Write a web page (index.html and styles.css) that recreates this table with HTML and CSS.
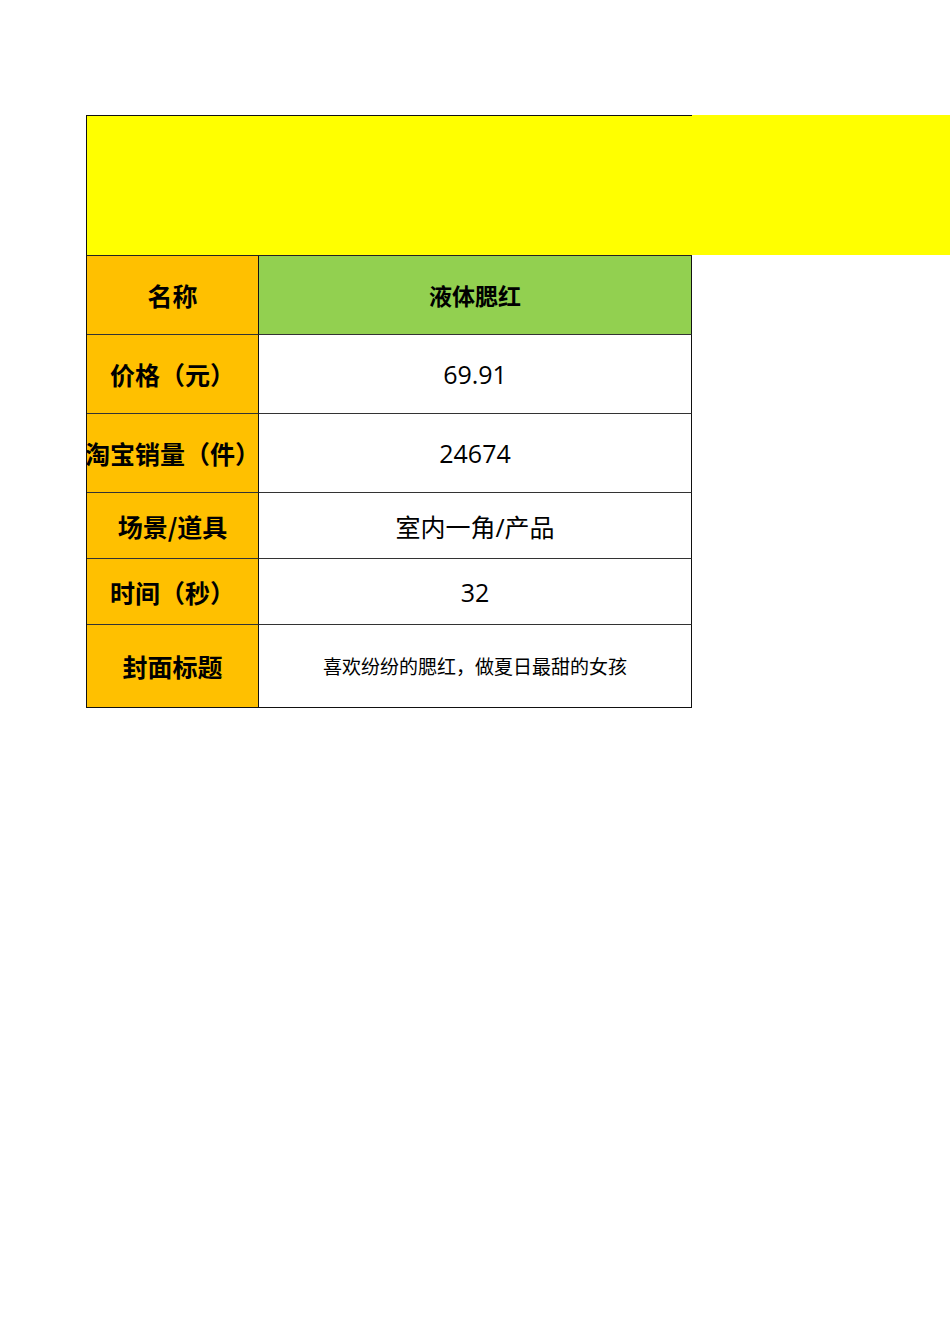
FILE: index.html
```html
<!DOCTYPE html>
<html lang="zh-CN">
<head>
<meta charset="utf-8">
<link rel="stylesheet" href="styles.css">
<title>液体腮红</title>
</head>
<body>
<div class="page">
  <div class="banner"></div>
  <div class="sheet">
    <div class="cell label">名称</div>
    <div class="cell name">液体腮红</div>
    <div class="cell label tall">价格（元）</div>
    <div class="cell value tall">69.91</div>
    <div class="cell label tall">淘宝销量（件）</div>
    <div class="cell value tall">24674</div>
    <div class="cell label short">场景/道具</div>
    <div class="cell value short">室内一角/产品</div>
    <div class="cell label short">时间（秒）</div>
    <div class="cell value short">32</div>
    <div class="cell label last">封面标题</div>
    <div class="cell value small last">喜欢纷纷的腮红，做夏日最甜的女孩</div>
  </div>
</div>
</body>
</html>
```

FILE: styles.css
```css
html, body {
  margin: 0;
  padding: 0;
  background: #ffffff;
}

.page {
  padding-top: 115px;
  padding-left: 86px;
  font-family: "Open Sans", "Noto Sans CJK SC", sans-serif;
  color: #000000;
}

.banner {
  position: relative;
  width: 864px;
  height: 140px;
  background: #ffff00;
  border-left: 1px solid #111111;
  box-sizing: border-box;
}

.banner::before {
  content: "";
  position: absolute;
  left: -1px;
  top: 0;
  width: 606px;
  height: 1px;
  background: #111111;
}

.sheet {
  display: grid;
  grid-template-columns: 172px 433px;
  grid-template-rows: 79px 79px 79px 66px 66px 83px;
  width: 606px;
  border-left: 1px solid #111111;
  border-top: 1px solid #222222;
  box-sizing: border-box;
}

.cell {
  display: flex;
  align-items: center;
  justify-content: center;
  border-right: 1px solid #111111;
  border-bottom: 1px solid #333333;
  overflow: hidden;
  white-space: nowrap;
  box-sizing: border-box;
}

.label {
  background: #ffc000;
  font-family: "Noto Sans CJK SC", sans-serif;
  font-weight: 700;
  font-size: 25px;
}

.name {
  background: #92d050;
  font-family: "Noto Sans CJK SC", sans-serif;
  font-weight: 700;
  font-size: 23px;
}

.value {
  background: #ffffff;
  font-size: 25px;
}

.small {
  font-size: 19px;
}

.last {
  border-bottom: 1px solid #111111;
}
```
